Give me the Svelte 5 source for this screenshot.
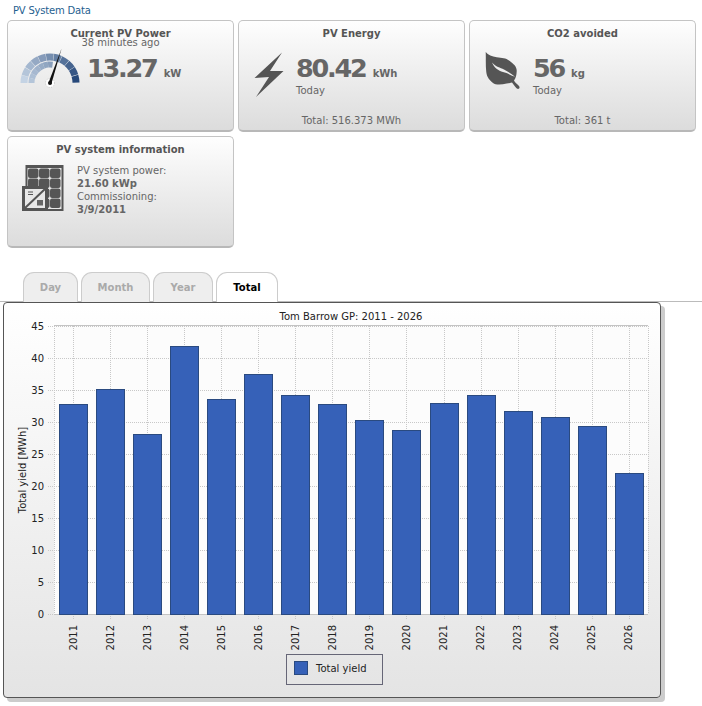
<script>
	const tabs = ['Day', 'Month', 'Year', 'Total'];
	const yields = [
		[2011, 32.8], [2012, 35.2], [2013, 28.2], [2014, 41.9],
		[2015, 33.6], [2016, 37.5], [2017, 34.2], [2018, 32.8],
		[2019, 30.3], [2020, 28.7], [2021, 33], [2022, 34.2],
		[2023, 31.7], [2024, 30.8], [2025, 29.4], [2026, 22]
	];
	const ticks = [0, 5, 10, 15, 20, 25, 30, 35, 40, 45];
	const axisY = (v) => 614 - v * 6.4;
	const barX = (i) => 73 + i * 37.05;

	// gauge segments, angle 180 = left, 0 = right
	function arc(r1, r2, a1, a2) {
		const p = (r, a) => {
			const t = (a * Math.PI) / 180;
			return `${(30 + r * Math.cos(t)).toFixed(2)} ${(35 - r * Math.sin(t)).toFixed(2)}`;
		};
		return `M${p(r2, a1)}A${r2} ${r2} 0 0 1 ${p(r2, a2)}L${p(r1, a2)}A${r1} ${r1} 0 0 0 ${p(r1, a1)}Z`;
	}
	function mix(t) {
		const from = [196, 211, 228];
		const to = [38, 72, 122];
		return `rgb(${from.map((c, i) => Math.round(c + (to[i] - c) * t)).join(',')})`;
	}
	const outer = Array.from({ length: 11 }, (_, i) => ({
		d: arc(22.5, 29.5, 180 - i * 16.36, 180 - i * 16.36 - 15.6),
		fill: mix(i / 10)
	}));
	const inner = Array.from({ length: 7 }, (_, i) => ({
		d: arc(15.5, 21.5, 180 - i * 14, 180 - (i + 1) * 14),
		fill: mix(0.1 + i / 22)
	}));
	const cells = [];
	for (let r = 0; r < 4; r++) for (let c = 0; c < 3; c++) cells.push([c, r]);
</script>

<div class="page">
	<div class="heading">PV System Data</div>

	<div class="cards">
		<div class="card">
			<div class="title">Current PV Power</div>
			<div class="sub">38 minutes ago</div>
			<div class="body power">
				<svg width="60" height="40" viewBox="0 0 60 40">
					{#each outer as s}<path d={s.d} fill={s.fill} />{/each}
					{#each inner as s}<path d={s.d} fill={s.fill} />{/each}
					<circle cx="30" cy="35" r="4.5" fill="#fff" stroke="#bbb" stroke-width="0.7" stroke-dasharray="1.2 1.2" />
					<path d="M28.6 34.6L41.6 0.4L31.4 35.8Z" fill="#111" />
					<circle cx="30" cy="35" r="2" fill="#111" />
				</svg>
				<div class="values">
					<div class="value">13.27<span class="unit">kW</span></div>
				</div>
			</div>
		</div>

		<div class="card">
			<div class="title">PV Energy</div>
			<div class="body energy">
				<svg width="30" height="45" viewBox="0 0 30 45">
					<path d="M28 0.5L0.5 26L15 25L2 45L29.5 19L16 19Z" fill="#555" />
				</svg>
				<div class="values">
					<div class="value">80.42<span class="unit">kWh</span></div>
					<div class="today">Today</div>
				</div>
			</div>
			<div class="total">Total: 516.373 MWh</div>
		</div>

		<div class="card">
			<div class="title">CO2 avoided</div>
			<div class="body co2">
				<svg width="36" height="40" viewBox="0 0 36 40">
					<path d="M0.7 0C3 3 7 4.500 11.700 5.300C17 6.200 21 6 24 8.500C29 12 32 15 31.700 19.300C31.500 23 31 26 29 28.500C30 30.500 32 32 34 34C35 35.500 34.500 37 33 37C31 36.500 29 33 27 30.500C25 31 23.500 31.500 21.700 31.500C16 33 10.500 33 8 31C3 27 1.700 24 1.200 19.300C0.500 13 1 6 0.700 0Z" fill="#555" />
					<path d="M7 10.500C11 15 15 15.500 19 17.500C23 19.500 27 22 30 24.800C26 23.500 22 20.800 18 20C13.500 19 9 15.500 7 10.500Z" fill="#eee" />
				</svg>
				<div class="values">
					<div class="value">56<span class="unit">kg</span></div>
					<div class="today">Today</div>
				</div>
			</div>
			<div class="total">Total: 361 t</div>
		</div>

		<div class="card">
			<div class="title">PV system information</div>
			<div class="body info">
				<svg width="42" height="46" viewBox="0 0 42 46">
					<rect x="3.500" y="0" width="38" height="46" fill="#555" />
					<rect x="5.500" y="3" width="34" height="41" fill="#e8e8e8" />
					{#each cells as [c, r]}
						<rect x={6 + c * 11} y={3.500 + r * 10} width="10.500" height="9.500" rx="2" fill="#555" />
					{/each}
					<rect x="0" y="21" width="26" height="25" fill="#555" />
					<rect x="3" y="24" width="20" height="19" fill="#e8e8e8" />
					<path d="M3 43L23 24" stroke="#555" stroke-width="2" />
					<path d="M6 27h5M6 29.500h5" stroke="#555" stroke-width="1" />
					<rect x="15" y="35" width="6" height="5.500" fill="#666" />
				</svg>
				<div class="lines">
					<div>PV system power:</div>
					<div class="strong">21.60 kWp</div>
					<div>Commissioning:</div>
					<div class="strong">3/9/2011</div>
				</div>
			</div>
		</div>
	</div>

	<div class="tabs">
		{#each tabs as tab}
			<div class="tab" class:active={tab === 'Total'}>{tab}</div>
		{/each}
	</div>

	<div class="panel">
		<svg width="656" height="394" viewBox="4 303 656 394">
			<text x="351" y="320" class="chart-title" text-anchor="middle">Tom Barrow GP: 2011 - 2026</text>

			<rect x="54" y="326" width="594" height="288" fill="#fcfcfc" />
			{#each ticks as t}
				<line x1="48" x2="648" y1={axisY(t) + 0.5} y2={axisY(t) + 0.5} class="grid" />
				<text x="44" y={axisY(t) + 4} class="label" text-anchor="end">{t}</text>
			{/each}
			{#each yields as [year], i}
				<line x1={Math.round(barX(i)) + 0.5} x2={Math.round(barX(i)) + 0.5} y1="326" y2="620" class="grid" />
			{/each}
			<line x1="54" x2="648" y1="325.500" y2="325.500" stroke="#c4c4c4" />
			<line x1="54" x2="648" y1="614.500" y2="614.500" stroke="#c4c4c4" />
			<line x1="54.500" x2="54.500" y1="326" y2="614" class="grid" />
			<line x1="648.500" x2="648.500" y1="326" y2="614" class="grid" />

			{#each yields as [year, v], i}
				<rect x={Math.round(barX(i)) - 13.5} y={Math.round(axisY(v)) + 0.5} width="28" height={614 - Math.round(axisY(v))} class="bar" />
				<text transform="translate({barX(i) + 3.5} 625) rotate(-90)" class="label" text-anchor="end">{year}</text>
			{/each}

			<text transform="translate(26 470) rotate(-90)" class="label" text-anchor="middle">Total yield [MWh]</text>

			<rect x="286.500" y="654.500" width="96" height="30" fill="none" stroke="#667" />
			<rect x="294.500" y="661.500" width="13" height="13" class="bar" />
			<text x="316" y="672" class="label">Total yield</text>
		</svg>
	</div>
</div>

<style>
	:global(body) {
		background: #fff;
	}

	.page {
		width: 702px;
		height: 706px;
		font-family: 'DejaVu Sans', sans-serif;
		font-size: 10px;
		color: #666;
		overflow: hidden;
	}

	.heading {
		height: 20px;
		padding: 4px 0 0 13px;
		box-sizing: border-box;
		font-size: 10px;
		letter-spacing: -0.2px;
		line-height: 14px;
		color: #1f6190;
	}

	.cards {
		display: grid;
		grid-template-columns: repeat(3, 227px);
		grid-auto-rows: 112px;
		gap: 4px;
		padding-left: 7px;
	}

	.card {
		box-sizing: border-box;
		display: flex;
		flex-direction: column;
		border: 1px solid #c4c4c4;
		border-bottom: 2px solid #b8b8b8;
		border-radius: 5px;
		background: linear-gradient(#fefefe, #dcdcdc);
	}

	.title {
		margin-top: 6px;
		text-align: center;
		font-weight: 700;
		font-size: 10px;
		line-height: 14px;
		color: #555;
	}

	.sub {
		margin-top: -5px;
		text-align: center;
		line-height: 13px;
		font-size: 10px;
		color: #666;
	}

	.body {
		display: flex;
		margin-top: 11px;
		gap: 12px;
		padding-left: 15px;
	}

	.power {
		margin-top: -1px;
		padding-left: 12px;
		gap: 7px;
	}

	.info {
		margin-top: 8px;
		padding-left: 14px;
		gap: 13px;
	}

	.values {
		margin-top: 2px;
	}

	.power .values {
		margin-top: 6px;
	}

	.value {
		font-weight: 700;
		font-size: 25.5px;
		letter-spacing: -2.2px;
		line-height: 28px;
		color: #666;
	}

	.unit {
		margin-left: 7px;
		font-size: 10px;
		letter-spacing: 0;
	}

	.today {
		margin-top: -4px;
		line-height: 13px;
	}

	.total {
		margin-top: auto;
		margin-bottom: 2px;
		text-align: center;
		line-height: 14px;
	}

	.lines {
		margin-top: -1px;
		line-height: 13px;
	}

	.strong {
		font-weight: 700;
	}

	.tabs {
		box-sizing: border-box;
		display: flex;
		gap: 3px;
		height: 30px;
		margin-top: 24px;
		padding-left: 23px;
		border-bottom: 1px solid #bbb;
	}

	.tab {
		box-sizing: border-box;
		width: 55px;
		height: 30px;
		border: 1px solid #ccc;
		border-bottom: 0;
		border-radius: 11px 11px 0 0;
		background: #eee;
		text-align: center;
		font-weight: 700;
		font-size: 10px;
		line-height: 30px;
		color: #aaa;
	}

	.tab:nth-child(2) {
		width: 69px;
	}

	.tab:nth-child(3) {
		width: 60px;
	}

	.tab:nth-child(4) {
		width: 62px;
	}

	.tab.active {
		background: #fff;
		color: #000;
	}

	.panel {
		box-sizing: border-box;
		width: 658px;
		height: 396px;
		margin-left: 3px;
		border: 1px solid #555;
		border-radius: 4px;
		background: linear-gradient(#fff, #e4e4e4);
		box-shadow: 4px 4px 0 #ccc;
	}

	.panel svg {
		display: block;
	}

	.chart-title,
	.label {
		font-family: 'DejaVu Sans', sans-serif;
		font-size: 10px;
		fill: #222;
	}

	.grid {
		stroke: #c8c8c8;
		stroke-dasharray: 1 1;
	}

	.bar {
		fill: #3661b8;
		stroke: #2a4a80;
	}
</style>
